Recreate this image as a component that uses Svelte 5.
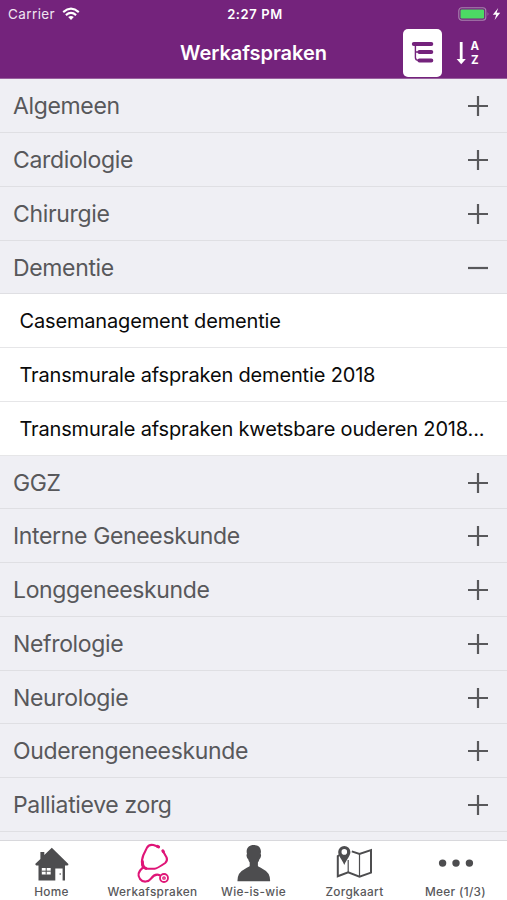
<script lang="ts">
  interface Category {
    name: string;
    items?: string[];
  }

  const categories: Category[] = [
    { name: 'Algemeen' },
    { name: 'Cardiologie' },
    { name: 'Chirurgie' },
    {
      name: 'Dementie',
      items: [
        'Casemanagement dementie',
        'Transmurale afspraken dementie 2018',
        'Transmurale afspraken kwetsbare ouderen 2018...',
      ],
    },
    { name: 'GGZ' },
    { name: 'Interne Geneeskunde' },
    { name: 'Longgeneeskunde' },
    { name: 'Nefrologie' },
    { name: 'Neurologie' },
    { name: 'Ouderengeneeskunde' },
    { name: 'Palliatieve zorg' },
    { name: '' },
  ];

  const tabs = [
    { id: 'home', label: 'Home' },
    { id: 'work', label: 'Werkafspraken' },
    { id: 'who', label: 'Wie-is-wie' },
    { id: 'map', label: 'Zorgkaart' },
    { id: 'more', label: 'Meer (1/3)' },
  ];

  let open = $state('Dementie');

  function toggle(name: string) {
    open = open === name ? '' : name;
  }
</script>

<div class="screen">
  <header>
    <div class="status">
      <div class="carrier">
        <span>Carrier</span>
        <svg width="18" height="14" viewBox="0 0 18 14" fill="none" stroke="#fff" stroke-width="2.1">
          <path d="M1.2 5.1Q9 -1.7 16.8 5.1" />
          <path d="M3.9 8.1Q9 3.7 14.1 8.1" />
          <path d="M6.2 10.1Q9 7.8 11.8 10.1L9 13Z" fill="#fff" stroke="none" />
        </svg>
      </div>
      <span class="time">2:27 PM</span>
      <svg class="battery" width="44" height="14" viewBox="0 0 44 14">
        <rect x=".8" y=".8" width="27" height="12.4" rx="3" fill="none" stroke="#a884ae" stroke-width="1.1" />
        <rect x="2.5" y="2.5" width="23.6" height="9" rx="1.3" fill="#4cd964" />
        <path d="M29.6 5Q31.4 7 29.6 9Z" fill="#a884ae" />
        <path d="M40.2 1L34.8 7.8H38.2L36.6 13L42.2 5.8H38.6Z" fill="#fff" />
      </svg>
    </div>
    <div class="navbar">
      <span></span>
      <h1>Werkafspraken</h1>
      <div class="actions">
        <button class="tree" aria-label="Categorieën">
          <svg width="39" height="48" viewBox="0 0 39 48" fill="none" stroke="#74237c" stroke-linecap="round">
            <path d="M10.8 14.9H28.3M16.4 23H28.3M16.4 31.4H28.3" stroke-width="4" />
            <path d="M12.4 15V28.5Q12.4 31.4 15.6 31.4M12.4 23H17" stroke-width="1.4" />
          </svg>
        </button>
        <button class="sort" aria-label="Alfabetisch">
          <svg width="12" height="24" viewBox="0 0 12 24" fill="none" stroke="#fff">
            <path d="M5.2 1V20" stroke-width="2.8" />
            <path d="M.6 18H9.8L5.2 23.2Z" fill="#fff" stroke="none" />
          </svg>
          <span class="az"><b>A</b><b>Z</b></span>
        </button>
      </div>
    </div>
  </header>

  <main>
    {#each categories as category}
      <button class="row category" onclick={() => toggle(category.name)}>
        <span>{category.name}</span>
        <svg width="22" height="22" viewBox="0 0 22 22" stroke="#58585b" stroke-width="2.2">
          <path d={category.name === open ? 'M1 11H21' : 'M1 11H21M11 1V21'} />
        </svg>
      </button>
      {#if category.name === open}
        {#each category.items ?? [] as item}
          <div class="row item">{item}</div>
        {/each}
      {/if}
    {/each}
  </main>

  <nav>
    {#each tabs as tab}
      <div class="tab">
        <svg width="40" height="42" viewBox="0 -0.6 40 42">
          {#if tab.id === 'home'}
            <path fill="#4d4d4f" fill-rule="evenodd" d="M20.8 6.2L37.4 22.3Q37.8 23.8 35.8 23.8H34V38.8H31.6V26.8H24.3V38.8H7.5V23.8H5.3Q4 23.6 4.4 22.2L9.4 17.4V10.4H13.3V13.4ZM10.8 26.4V33H19.7V26.4Z" />
            <path stroke="#4d4d4f" stroke-width="1" d="M15.2 26V33M10.8 29.6H19.8" />
            <circle cx="29.2" cy="32.4" r=".8" fill="#4d4d4f" />
          {:else if tab.id === 'work'}
            <g fill="none" stroke="#df1577" stroke-linecap="round" stroke-linejoin="round">
              <path stroke-width="2.1" d="M26.4 5.2L21.4 3.5Q17.4 2.4 15 6L11.4 13.4C10 17 9.6 20.4 10.2 23Q11 27.2 16 27.2H22.6Q25 27 33.2 21.4Q35.8 19.2 34.6 15.8L31.2 9.8" />
              <path stroke-width="2.1" d="M10.8 26C5.4 30.6 5.8 34.4 8 37.4C11 41.2 16.4 40.6 19 37C21.4 33.6 23.6 31.8 27.8 33.6" />
              <circle cx="32" cy="36.4" r="4" stroke-width="1.8" />
              <circle cx="32" cy="36.4" r="1.2" stroke-width="1.3" />
              <path stroke-width="3" d="M25.4 4.8L26.6 5.3M30.8 9.2L31.4 10.2M10.4 20Q10.2 25.6 14 26.8" />
            </g>
          {:else if tab.id === 'who'}
            <path fill="#4d4d4f" d="M20.8 3.5C26.1 3.5 29 7.4 27.6 12.4C28.7 13.2 27.8 16.6 26.4 17.6Q25.8 20 24.9 21V24.5Q25.3 25.2 29.8 27.3Q37.4 30.8 37.1 39.6H4.5Q4.2 30.8 11.8 27.3Q16.3 25.2 16.7 24.5V21Q15.8 20 15.2 17.6C13.8 16.6 12.9 13.2 14 12.4C12.6 7.4 15.5 3.5 20.8 3.5Z" />
          {:else if tab.id === 'map'}
            <g fill="none" stroke="#4d4d4f">
              <path stroke-width="2" d="M3.8 14V34.7L14.2 30.8L25.5 35L37 31V8.5L25.5 12.4L17.8 9.8M3.5 14.7L5.5 13.4" />
              <path stroke-width="1.2" d="M14.2 18.5V31M25.5 12.4V35" />
            </g>
            <path fill="#4d4d4f" fill-rule="evenodd" d="M10.3 4.3A6.1 6.1 0 0 1 16.4 10.4C16.4 14.5 12.8 17 10.3 23.5C7.8 17 4.2 14.5 4.2 10.4A6.1 6.1 0 0 1 10.3 4.3ZM10.3 7.5A2.8 2.8 0 1 0 10.3 13.1A2.8 2.8 0 0 0 10.3 7.5Z" />
          {:else}
            <g fill="#4d4d4f">
              <circle cx="7.6" cy="21.5" r="3.7" />
              <circle cx="21" cy="21.5" r="3.7" />
              <circle cx="34.4" cy="21.5" r="3.7" />
            </g>
          {/if}
        </svg>
        <span>{tab.label}</span>
      </div>
    {/each}
  </nav>
</div>

<style>
  :global(body) { margin: 0; }
  .screen {
    display: flex; flex-direction: column; height: 900px; overflow: hidden;
    font-family: Inter, "Liberation Sans", sans-serif; background: #efeff4;
  }
  button { appearance: none; border: 0; padding: 0; margin: 0; font: inherit; background: none; }
  svg { display: block; flex: none; }

  header { flex: none; box-sizing: border-box; height: 79.4px; background: #74237c; color: #fff; border-bottom: 1px solid #98609e; }
  .status {
    display: grid; grid-template-columns: 1fr auto 1fr; align-items: center;
    height: 27px; padding: 0 5px 0 8px; font-size: 13.5px;
  }
  .carrier { display: flex; align-items: center; gap: 7px; letter-spacing: 0.4px; color: #f0e6f1; }
  .time { font-weight: 600; font-size: 13px; letter-spacing: 0.6px; }
  .battery { justify-self: end; }
  .navbar { display: grid; grid-template-columns: 1fr auto 1fr; align-items: center; height: 52px; box-sizing: border-box; }
  h1 { margin: 0; font-size: 20px; font-weight: 600; letter-spacing: -0.05px; }
  .actions { display: flex; justify-content: flex-end; align-items: center; gap: 14px; padding-right: 28px; }
  .tree { width: 39px; height: 48px; border-radius: 5px; background: #fff; }
  .sort { display: flex; align-items: center; gap: 2px; color: #fff; }
  .az { display: flex; flex-direction: column; font-size: 11.5px; line-height: 14px; }
  .az b { display: block; height: 14px; }

  main { flex: 1; min-height: 0; overflow: hidden; }
  .row {
    display: flex; align-items: center; justify-content: space-between; box-sizing: border-box;
    width: 100%; height: 53.75px; padding-top: 1px; border-bottom: 1px solid #dfdfe3; white-space: nowrap;
  }
  .category { padding-left: 13px; padding-right: 18.5px; background: #efeff4; color: #58585b; font-size: 23px; letter-spacing: -0.35px; }
  .item { padding-left: 19.5px; background: #fff; color: #0a0a0a; font-size: 20px; letter-spacing: -0.16px; border-bottom-color: #e6e6e8; }

  nav {
    flex: none; display: grid; grid-template-columns: repeat(5, 101px); justify-content: center;
    height: 60px; background: #fff; border-top: 1px solid #d8d8dc; box-sizing: border-box;
  }
  .tab { display: flex; flex-direction: column; align-items: center; }
  .tab svg { margin-right: 2px; }
  .tab span { padding-top: 1px; font-size: 11.8px; line-height: 16px; font-weight: 500; letter-spacing: 0.34px; color: #58585b; white-space: nowrap; }
</style>
